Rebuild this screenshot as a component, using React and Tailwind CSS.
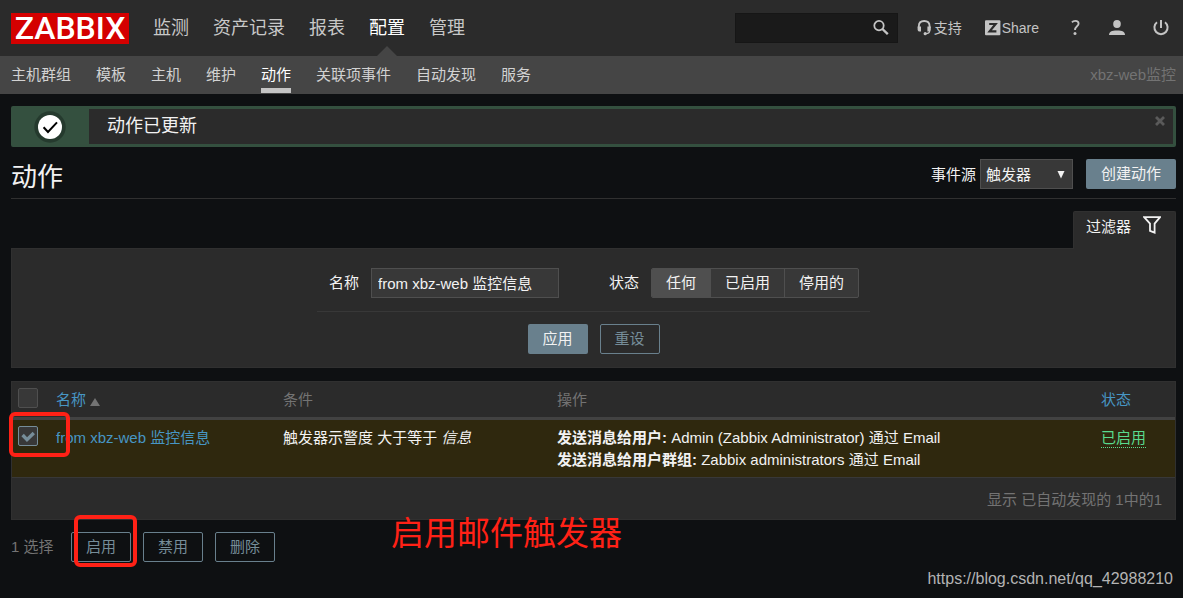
import React, { useState } from "react";

const menu = ["监测", "资产记录", "报表", "配置", "管理"];
const subMenu = [
  "主机群组",
  "模板",
  "主机",
  "维护",
  "动作",
  "关联项事件",
  "自动发现",
  "服务",
];
const statusOptions = [
  { label: "任何", value: "any" },
  { label: "已启用", value: "enabled" },
  { label: "停用的", value: "disabled" },
];

const SearchIcon = () => (
  <svg width="16" height="16" viewBox="0 0 16 16" fill="none" stroke="#c4c4c4">
    <circle cx="6" cy="5.6" r="4.7" strokeWidth="1.8" />
    <path d="M9.4 9 L14.8 14.2" strokeWidth="2.4" />
  </svg>
);

const SupportIcon = () => (
  <svg width="16" height="16" viewBox="0 0 16 16" fill="none" stroke="#c4c4c4">
    <path d="M1.8 8 V6.3 C1.8 2.8 4.2 1 7.2 1 S12.6 2.8 12.6 6.3 V8" strokeWidth="1.8" />
    <path d="M0.6 6.6 h3.4 v5 H3 C1.4 11.6 0.6 10.6 0.6 9.4 Z M13.8 6.6 h-3.4 v5 H11.4 c1.6 0 2.4 -1 2.4 -2.2 Z" fill="#c4c4c4" stroke="none" />
    <path d="M12.8 10.4 C12.8 12.6 11.3 13.4 9 13.7" strokeWidth="1.2" />
    <circle cx="8.2" cy="13.7" r="1.6" fill="#c4c4c4" stroke="none" />
  </svg>
);

const ShareIcon = () => (
  <svg width="16" height="16" viewBox="0 0 16 16">
    <rect y="0.3" width="15.4" height="15" rx="1" fill="#c4c4c4" />
    <path d="M4.2 4 H10.6 L4.6 11.4 H11.4" fill="none" stroke="#2b2b2b" strokeWidth="2.2" />
  </svg>
);

const HelpIcon = () => (
  <svg width="10" height="16" viewBox="0 0 10 16" fill="none" stroke="#c4c4c4">
    <path d="M1 2.4 C1.8 1.3 3 0.9 4.3 0.9 C6.4 0.9 7.6 2 7.6 3.7 C7.6 6.3 4 6.4 4 10" strokeWidth="1.8" />
    <circle cx="4" cy="13.4" r="1.5" fill="#c4c4c4" stroke="none" />
  </svg>
);

const UserIcon = () => (
  <svg width="16" height="16" viewBox="0 0 16 16" fill="#c4c4c4">
    <ellipse cx="8" cy="4" rx="3.8" ry="4" />
    <path d="M0 15 C0 11.6 2.5 10.4 8 10.4 S16 11.6 16 15 Z" />
  </svg>
);

const PowerIcon = () => (
  <svg width="16" height="16" viewBox="0 0 16 16" fill="none" stroke="#c4c4c4" strokeWidth="2">
    <path d="M8 0 V8" />
    <path d="M4 2.3 A6.6 6.6 0 1 0 12 2.3" />
  </svg>
);

const FilterIcon = () => (
  <svg width="18" height="18" viewBox="0 0 18 18" fill="none" stroke="#f2f2f2" strokeWidth="1.8">
    <path d="M1.2 1.2 H17 L11.6 7.6 V16.6 L7 14.8 V7.6 Z" />
  </svg>
);

const SuccessIcon = () => (
  <svg width="32" height="32" viewBox="0 0 32 32">
    <circle cx="16" cy="16" r="15.7" fill="#253a2e" />
    <circle cx="16" cy="16" r="12" fill="#ffffff" />
    <path d="M9.6 16.2 L14 21 L23 11.4" fill="none" stroke="#000000" strokeWidth="2" />
  </svg>
);

const CloseIcon = () => (
  <svg width="10" height="10" viewBox="0 0 10 10" stroke="#5a5a5a" strokeWidth="2.8">
    <path d="M1 1 L9 9 M9 1 L1 9" />
  </svg>
);

const Checkbox = ({ id, label, checked, onChange }) => (
  <span className="relative block size-5">
    <input
      id={id}
      type="checkbox"
      aria-label={label}
      checked={checked}
      onChange={onChange}
      className="block size-5 appearance-none rounded-xs border border-[#4f4f4f] bg-[#383838] checked:border-[#768d99]"
    />
    {checked && (
      <svg
        className="pointer-events-none absolute inset-0"
        width="20"
        height="20"
        viewBox="0 0 20 20"
        fill="none"
        stroke="#768d99"
        strokeWidth="3.4"
      >
        <path d="M4.6 9 L9 13.6 L15.8 7" />
      </svg>
    )}
  </span>
);

const OutlineButton = ({ children }) => (
  <button
    type="button"
    className="h-[30px] w-[60px] rounded-xs border border-[#69808d] text-[#768d99]"
  >
    {children}
  </button>
);

const Header = () => (
  <header>
    <div className="flex h-14 items-center bg-[#2b2b2b] pr-3.5 pl-[11px]">
      <a
        href="#"
        className="flex h-[31px] w-[118px] items-center justify-center bg-[#d40000] font-[family-name:Roboto] text-[32px] leading-8 font-medium text-white"
      >
        ZABBIX
      </a>
      <nav className="ml-6 flex gap-6 self-stretch text-lg">
        {menu.map((item) => (
          <a
            key={item}
            href="#"
            className={
              item === "配置"
                ? "relative flex items-center text-white"
                : "flex items-center text-[#c8c8c8]"
            }
          >
            {item}
            {item === "配置" && (
              <svg className="absolute bottom-0 left-2" width="20" height="10" viewBox="0 0 20 10">
                <path d="M0 10 L10 0 L20 10 Z" fill="#454545" />
              </svg>
            )}
          </a>
        ))}
      </nav>
      <div className="ml-auto flex items-center text-sm text-[#c4c4c4]">
        <form className="flex h-[30px] w-[163px] items-center border border-[#161616] bg-[#1a1a1a] pr-2">
          <input type="text" aria-label="搜索" className="min-w-0 flex-1 bg-transparent px-2 outline-none" />
          <button type="button" aria-label="搜索">
            <SearchIcon />
          </button>
        </form>
        <a href="#" className="ml-[19px] flex items-center gap-px">
          <SupportIcon />
          支持
        </a>
        <a href="#" className="ml-[23px] flex items-center gap-px">
          <ShareIcon />
          Share
        </a>
        <a href="#" aria-label="帮助" className="ml-8">
          <HelpIcon />
        </a>
        <a href="#" aria-label="用户" className="ml-7">
          <UserIcon />
        </a>
        <a href="#" aria-label="退出" className="ml-7">
          <PowerIcon />
        </a>
      </div>
    </div>
    <div className="flex h-[38px] justify-between bg-[#454545] pr-[7px] pl-[11px]">
      <nav className="flex gap-[25px]">
        {subMenu.map((item) => (
          <a
            key={item}
            href="#"
            className={
              item === "动作"
                ? "mb-px border-b-[5px] border-[#c4c4c4] pt-2 text-white"
                : "pt-2 text-[#d2d2d2]"
            }
          >
            {item}
          </a>
        ))}
      </nav>
      <div className="pt-2 text-[#737373]">xbz-web监控</div>
    </div>
  </header>
);

const Message = () => (
  <div className="flex h-[41px] rounded-xs border-[3px] border-[#34503f] bg-[#2b2b2b]">
    <div className="flex w-[75px] items-center bg-[#34503f] pl-5">
      <SuccessIcon />
    </div>
    <div className="flex-1 pl-[18px] text-lg leading-[34px]">动作已更新</div>
    <button type="button" aria-label="关闭" className="mt-[7px] mr-2 self-start">
      <CloseIcon />
    </button>
  </div>
);

const Filter = () => {
  const [name, setName] = useState("from xbz-web 监控信息");
  const [status, setStatus] = useState("any");

  return (
    <section className="mt-3">
      <div className="flex justify-end">
        <button
          type="button"
          className="relative z-10 -mb-px flex h-[38px] w-[103px] justify-between rounded-t-xs border border-b-0 border-[#303030] bg-[#2b2b2b] pt-1 pr-3.5 pl-3"
        >
          <span>过滤器</span>
          <FilterIcon />
        </button>
      </div>
      <form className="flex h-[120px] flex-col items-center border border-[#303030] bg-[#2b2b2b] pt-[19px]">
        <div className="flex w-[553px] items-center border-b border-[#383838] pr-[11px] pb-[13px] pl-3">
          <label htmlFor="filter_name">名称</label>
          <input
            id="filter_name"
            type="text"
            value={name}
            onChange={(e) => setName(e.target.value)}
            className="ml-3 h-[30px] w-[188px] border border-[#4f4f4f] bg-[#383838] px-1.5 pb-0.5 outline-none"
          />
          <fieldset className="ml-auto flex items-center">
            <legend className="float-left mr-3">状态</legend>
            <div className="flex h-[30px] divide-x divide-[#4f4f4f] overflow-hidden rounded-xs border border-[#4f4f4f] bg-[#383838]">
              {statusOptions.map((opt) => (
                <label
                  key={opt.value}
                  className="flex items-center px-3.5 has-checked:bg-[#4f4f4f]"
                >
                  <input
                    type="radio"
                    name="filter_status"
                    value={opt.value}
                    checked={status === opt.value}
                    onChange={() => setStatus(opt.value)}
                    className="sr-only"
                  />
                  {opt.label}
                </label>
              ))}
            </div>
          </fieldset>
        </div>
        <div className="mt-3 flex gap-3">
          <button type="button" className="h-[30px] w-[60px] rounded-xs bg-[#69808d]">
            应用
          </button>
          <OutlineButton>重设</OutlineButton>
        </div>
      </form>
    </section>
  );
};

const ActionsTable = () => {
  const [checked, setChecked] = useState(true);

  return (
    <table className="mt-[13px] w-full table-fixed border-separate border-spacing-0 border border-[#303030] bg-[#2b2b2b] text-left">
      <colgroup>
        <col className="w-[38px]" />
        <col className="w-[227px]" />
        <col className="w-[274px]" />
        <col />
        <col className="w-20" />
      </colgroup>
      <thead>
        <tr className="h-[38px] align-top text-[#737373] *:border-b-[3px] *:border-[#424242]">
          <th className="pt-1.5 pl-1.5 font-normal">
            <Checkbox id="all_actions" label="全选" checked={false} onChange={() => {}} />
          </th>
          <th className="px-1.5 pt-[7px] font-normal">
            <a href="#" className="flex items-center gap-1 text-[#4796c4]">
              名称
              <svg className="mt-1" width="10" height="8" viewBox="0 0 10 8">
                <path d="M0 8 L5 0 L10 8 Z" fill="#737373" />
              </svg>
            </a>
          </th>
          <th className="px-1.5 pt-[7px] font-normal">条件</th>
          <th className="px-1.5 pt-[7px] font-normal">操作</th>
          <th className="px-1.5 pt-[7px] font-normal">
            <a href="#" className="text-[#4796c4]">状态</a>
          </th>
        </tr>
      </thead>
      <tbody>
        <tr className="h-[58px] bg-[#2f280e] align-top *:border-b *:border-[#383838]">
          <td className="pt-1.5 pl-1.5">
            <Checkbox
              id="action_1"
              label="from xbz-web 监控信息"
              checked={checked}
              onChange={() => setChecked(!checked)}
            />
          </td>
          <td className="px-1.5 pt-[7px]">
            <a href="#" className="text-[#4796c4]">from xbz-web 监控信息</a>
          </td>
          <td className="px-1.5 pt-[7px]">
            触发器示警度 大于等于 <em>信息</em>
          </td>
          <td className="px-1.5 pt-[7px]">
            <b>发送消息给用户:</b> Admin (Zabbix Administrator) 通过 Email
            <br />
            <b>发送消息给用户群组:</b> Zabbix administrators 通过 Email
          </td>
          <td className="px-1.5 pt-[7px]">
            <button type="button" className="h-5 border-b border-dotted border-[#59db8f] leading-5 text-[#59db8f]">
              已启用
            </button>
          </td>
        </tr>
      </tbody>
      <tfoot>
        <tr className="h-[41px]">
          <td colSpan={5} className="pt-0.5 pr-[13px] text-right text-[#737373]">
            显示 已自动发现的 1中的1
          </td>
        </tr>
      </tfoot>
    </table>
  );
};

const App = () => {
  return (
    <div className="relative min-h-screen bg-[#0e1012] font-['Liberation_Sans','Noto_Sans_CJK_SC',sans-serif] text-[15px] leading-[22px] text-[#f2f2f2]">
      <Header />
      <main className="pt-3 pr-[7px] pl-[11px]">
        <Message />
        <div className="mt-3 flex h-10 items-start border-b border-[#303030]">
          <h1 className="text-[26px] leading-9">动作</h1>
          <label htmlFor="eventsource" className="mt-[5px] ml-auto">
            事件源
          </label>
          <div className="relative ml-1">
            <select
              id="eventsource"
              className="h-[30px] w-[93px] appearance-none border border-[#4f4f4f] bg-[#383838] pt-0.5 pl-[5px]"
            >
              <option>触发器</option>
            </select>
            <svg className="pointer-events-none absolute top-3 right-2" width="8" height="8" viewBox="0 0 8 8">
              <path d="M0.5 0 H7.5 L4 7.5 Z" fill="#f2f2f2" />
            </svg>
          </div>
          <button type="button" className="ml-[13px] h-[30px] w-[90px] rounded-xs bg-[#69808d]">
            创建动作
          </button>
        </div>
        <Filter />
        <ActionsTable />
        <div className="mt-3 flex h-[30px] items-center gap-3 text-[#737373]">
          <span className="w-12">1 选择</span>
          <OutlineButton>启用</OutlineButton>
          <OutlineButton>禁用</OutlineButton>
          <OutlineButton>删除</OutlineButton>
        </div>
      </main>

      {/* Notes laid over the page */}
      <div className="pointer-events-none absolute top-[412px] left-[9px] h-[45px] w-[61px] rounded-md border-4 border-[#ff2116]" />
      <div className="pointer-events-none absolute top-[515px] left-[74px] h-[52px] w-[63px] rounded-md border-4 border-[#ff2116]" />
      <p className="pointer-events-none absolute top-[514px] left-[391px] text-[33px] leading-10 text-[#ff2116]">
        启用邮件触发器
      </p>
      <p className="pointer-events-none absolute top-[568px] right-2.5 text-base leading-[22px] text-[#b4b4b4]">
        https://blog.csdn.net/qq_42988210
      </p>
    </div>
  );
};

export default App;
